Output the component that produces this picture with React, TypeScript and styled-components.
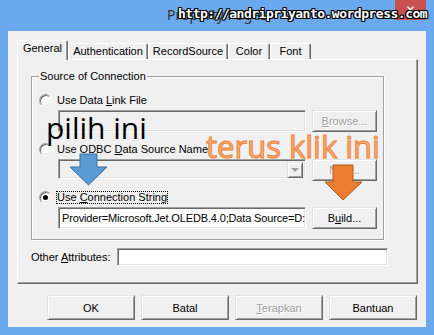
import React from "react";
import styled, { createGlobalStyle, css } from "styled-components";

const GlobalStyle = createGlobalStyle`
  html, body { margin: 0; padding: 0; }
  body {
    background: #6aa9ee;
    font-family: "Liberation Sans", Arial, sans-serif;
    font-size: 11px;
    color: #000;
  }
`;

const sunken = css`
  box-sizing: border-box;
  border-style: solid;
  border-width: 1px;
  border-color: #a0a0a0 #ffffff #ffffff #a0a0a0;
  box-shadow: inset 1px 1px #696969, inset -1px -1px #e3e3e3;
`;

const raised = css`
  box-sizing: border-box;
  border-style: solid;
  border-width: 1px;
  border-color: #e3e3e3 #696969 #696969 #e3e3e3;
  box-shadow: inset 1px 1px #ffffff, inset -1px -1px #a0a0a0;
`;

const Frame = styled.div`
  position: relative;
  width: 434px;
  height: 335px;
  box-sizing: border-box;
  background: #6aa9ee;
  padding: 0 8px 8px;
  display: flex;
  flex-direction: column;
  overflow: hidden;
`;

const TitleBar = styled.div`
  height: 31px;
  flex: none;
  display: grid;
  grid-template-columns: 1fr auto 1fr;
  align-items: start;
`;

const TitleText = styled.div`
  grid-column: 2;
  margin-top: 6px;
  font-family: "Noto Sans", "Open Sans", sans-serif;
  font-size: 14px;
  line-height: 18px;
  color: #3a3320;
`;

const CloseButton = styled.div`
  grid-column: 3;
  justify-self: end;
  width: 31px;
  height: 20px;
  background: #c75050;
  color: #ffffff;
  display: flex;
  align-items: center;
  justify-content: center;
  font-family: "DejaVu Sans", sans-serif;
  font-size: 12px;
`;

const Client = styled.div`
  flex: 1;
  background: #f0f0f0;
  box-sizing: border-box;
  padding: 9px 8px 7px 9px;
  display: flex;
  flex-direction: column;
`;

const TabRow = styled.div`
  display: flex;
  align-items: flex-end;
  height: 19px;
  position: relative;
  z-index: 1;
`;

const Tab = styled.div<{ $w: number; $active?: boolean }>`
  box-sizing: border-box;
  width: ${(p) => p.$w}px;
  height: ${(p) => (p.$active ? 20 : 16)}px;
  margin-bottom: ${(p) => (p.$active ? -1 : 0)}px;
  background: #f0f0f0;
  border-style: solid;
  border-width: 1px 1px 0 1px;
  border-color: #ffffff #696969 transparent #ffffff;
  box-shadow: inset -1px 0 #a0a0a0;
  border-radius: 2px 2px 0 0;
  display: flex;
  justify-content: center;
  align-items: flex-start;
  padding-top: 1px;
  line-height: 13px;
  white-space: nowrap;
`;

const Panel = styled.div`
  box-sizing: border-box;
  width: 401px;
  height: 225px;
  border-style: solid;
  border-width: 1px;
  border-color: #ffffff #696969 #696969 #ffffff;
  box-shadow: inset -1px -1px #a0a0a0;
  padding: 10px 0 0 13px;
  display: flex;
  flex-direction: column;
`;

const Group = styled.fieldset`
  box-sizing: border-box;
  width: 353px;
  margin: 0;
  padding: 0;
  border: 1px solid #a0a0a0;
  box-shadow: inset 1px 1px #ffffff, 1px 1px #ffffff;
  min-inline-size: auto;
`;

const Legend = styled.legend`
  margin-left: 7px;
  padding: 0 1px;
  line-height: 13px;
  background: #f0f0f0;
`;

const GroupBody = styled.div`
  padding: 11px 0 10px 7px;
  display: flex;
  flex-direction: column;
`;

const RadioRow = styled.div<{ $gap?: number }>`
  display: flex;
  align-items: center;
  gap: 4px;
  height: 13px;
  margin-top: ${(p) => p.$gap ?? 0}px;
`;

const RadioCircle = styled.span<{ $checked?: boolean }>`
  position: relative;
  flex: none;
  width: 13px;
  height: 13px;
  box-sizing: border-box;
  border-radius: 50%;
  border: 1px solid;
  border-color: #a0a0a0 #ffffff #ffffff #a0a0a0;
  box-shadow: inset 1px 1px #696969, inset -1px -1px #e3e3e3;
  background: #ffffff;
  ${(p) =>
    p.$checked &&
    css`
      &::after {
        content: "";
        position: absolute;
        left: 3px;
        top: 3px;
        width: 5px;
        height: 5px;
        border-radius: 50%;
        background: #000000;
      }
    `}
`;

const RadioLabel = styled.span<{ $focus?: boolean }>`
  border: 1px ${(p) => (p.$focus ? "dotted #000000" : "solid transparent")};
  line-height: 11px;
  white-space: nowrap;
`;

const FieldRow = styled.div`
  display: grid;
  grid-template-columns: 248px 65px;
  column-gap: 6px;
  align-items: start;
  margin: 3px 0 0 19px;
`;

const TextBox = styled.div<{ $disabled?: boolean; $h: number }>`
  ${sunken};
  height: ${(p) => p.$h}px;
  background: ${(p) => (p.$disabled ? "#f0f0f0" : "#ffffff")};
  padding: 0 3px;
  display: flex;
  align-items: center;
  overflow: hidden;
  white-space: nowrap;
  letter-spacing: -0.15px;
`;

const ComboBox = styled.div`
  ${sunken};
  height: 20px;
  background: #f0f0f0;
  display: flex;
  justify-content: flex-end;
  padding: 2px;
`;

const DropButton = styled.div`
  ${raised};
  width: 16px;
  height: 16px;
  background: #f0f0f0;
  display: flex;
  align-items: center;
  justify-content: center;
  &::after {
    content: "";
    border-left: 4px solid transparent;
    border-right: 4px solid transparent;
    border-top: 4px solid #a0a0a0;
  }
`;

const SideButton = styled.button`
  ${raised};
  height: 22px;
  width: 65px;
  margin: 0;
  padding: 0;
  background: #f0f0f0;
  font: 11px "Liberation Sans", Arial, sans-serif;
  color: #000000;
  &:disabled {
    color: #a0a0a0;
    text-shadow: 1px 1px #ffffff;
  }
`;

const AttrRow = styled.div`
  display: flex;
  align-items: center;
  gap: 6px;
  margin-top: 8px;
  white-space: nowrap;
`;

const AttrField = styled.div`
  ${sunken};
  width: 271px;
  height: 18px;
  background: #ffffff;
`;

const Footer = styled.div`
  display: flex;
  justify-content: flex-end;
  gap: 6px;
  margin-top: 11px;
  padding-right: 1px;
`;

const FooterButton = styled.button`
  ${raised};
  width: 88px;
  height: 25px;
  margin: 0;
  padding: 0;
  background: #f0f0f0;
  font: 11px "Liberation Sans", Arial, sans-serif;
  color: #000000;
  &:disabled {
    color: #a0a0a0;
    text-shadow: 1px 1px #ffffff;
  }
`;

const Watermark = styled.div`
  position: absolute;
  left: 178px;
  top: 6px;
  font-family: "DejaVu Sans Mono", monospace;
  font-weight: bold;
  font-size: 13px;
  letter-spacing: -0.5px;
  line-height: 15px;
  color: #ffffff;
  white-space: nowrap;
  text-shadow: 1px 0 #000, -1px 0 #000, 0 1px #000, 0 -1px #000, 1px 1px #000,
    -1px -1px #000, 1px -1px #000, -1px 1px #000;
`;

const Annotation = styled.div<{ $x: number; $y: number; $size: number; $orange?: boolean }>`
  position: absolute;
  left: ${(p) => p.$x}px;
  top: ${(p) => p.$y}px;
  font-family: "Open Sans", "Noto Sans", sans-serif;
  font-size: ${(p) => p.$size}px;
  line-height: 1;
  white-space: nowrap;
  color: ${(p) => (p.$orange ? "#f6b07e" : "#000000")};
  ${(p) =>
    p.$orange &&
    css`
      -webkit-text-stroke: 1px #ee8233;
    `}
`;

const ArrowSvg = styled.svg<{ $x: number; $y: number }>`
  position: absolute;
  left: ${(p) => p.$x}px;
  top: ${(p) => p.$y}px;
  overflow: visible;
`;

export default function App() {
  return (
    <>
      <GlobalStyle />
      <Frame>
        <TitleBar>
          <TitleText>Property Pages</TitleText>
          <CloseButton>✕</CloseButton>
        </TitleBar>
        <Client>
          <TabRow>
            <Tab $w={51} $active>General</Tab>
            <Tab $w={80}>Authentication</Tab>
            <Tab $w={80}>RecordSource</Tab>
            <Tab $w={42}>Color</Tab>
            <Tab $w={41}>Font</Tab>
          </TabRow>
          <Panel>
            <Group>
              <Legend>Source of Connection</Legend>
              <GroupBody>
                <RadioRow>
                  <RadioCircle />
                  <RadioLabel>
                    Use Data <u>L</u>ink File
                  </RadioLabel>
                </RadioRow>
                <FieldRow>
                  <TextBox $h={22} $disabled />
                  <SideButton disabled>
                    <u>B</u>rowse...
                  </SideButton>
                </FieldRow>
                <RadioRow $gap={11}>
                  <RadioCircle />
                  <RadioLabel>
                    Use ODBC <u>D</u>ata Source Name
                  </RadioLabel>
                </RadioRow>
                <FieldRow>
                  <ComboBox>
                    <DropButton />
                  </ComboBox>
                  <SideButton disabled>
                    N<u>e</u>w...
                  </SideButton>
                </FieldRow>
                <RadioRow $gap={10}>
                  <RadioCircle $checked />
                  <RadioLabel $focus>
                    Use <u>C</u>onnection String
                  </RadioLabel>
                </RadioRow>
                <FieldRow>
                  <TextBox $h={22}>Provider=Microsoft.Jet.OLEDB.4.0;Data Source=D:\</TextBox>
                  <SideButton>
                    B<u>u</u>ild...
                  </SideButton>
                </FieldRow>
              </GroupBody>
            </Group>
            <AttrRow>
              <span>
                Other <u>A</u>ttributes:
              </span>
              <AttrField />
            </AttrRow>
          </Panel>
          <Footer>
            <FooterButton>OK</FooterButton>
            <FooterButton>Batal</FooterButton>
            <FooterButton disabled>
              <u>T</u>erapkan
            </FooterButton>
            <FooterButton>Bantuan</FooterButton>
          </Footer>
        </Client>

        <Watermark>http://andripriyanto.wordpress.com</Watermark>
        <Annotation $x={46} $y={113} $size={30}>
          pilih ini
        </Annotation>
        <ArrowSvg $x={69} $y={153} width={40} height={34} viewBox="0 0 40 34">
          <path d="M11 1 H28 V14 H38 L19.5 32 L1 14 H11 Z" fill="#5b9bd5" stroke="#41719c" strokeWidth={1} />
        </ArrowSvg>
        <Annotation $x={206} $y={131} $size={31} $orange>
          terus klik ini
        </Annotation>
        <ArrowSvg $x={324} $y={164} width={40} height={38} viewBox="0 0 40 38">
          <path d="M9 1 H29 V18 H38 L19 36 L1 18 H9 Z" fill="#ed7d31" stroke="#ae5a21" strokeWidth={1} />
        </ArrowSvg>
      </Frame>
    </>
  );
}
